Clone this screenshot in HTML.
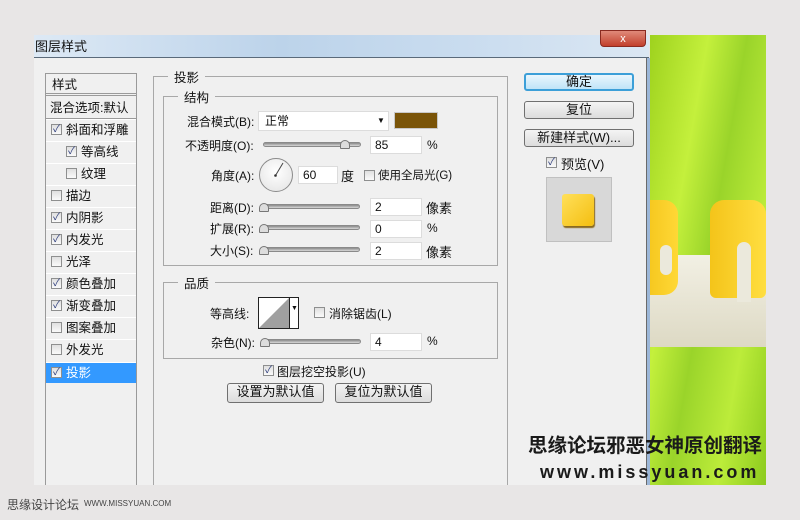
<!DOCTYPE html>
<html><head><meta charset="utf-8"><style>
*{margin:0;padding:0;box-sizing:border-box}
body{width:800px;height:520px;background:#e8e6e6;position:relative;overflow:hidden;font-family:"Liberation Sans","Noto Sans CJK SC",sans-serif;font-size:12px;color:#111}
.a{position:absolute;white-space:nowrap}
.cb{position:absolute;width:11px;height:11px;border:1px solid #8e8f8f;background:linear-gradient(#e0e0e0,#fafafa);font-size:10px;line-height:9px;text-align:center;color:#2a3a7a}
.inp{position:absolute;height:18px;background:#fff;border:1px solid #dcdcdc;padding-left:4px;line-height:16px}
.sl{position:absolute;height:5px;border-radius:3px;background:linear-gradient(#8a8a8a,#d8d8d8);border:1px solid #8a8a8a}
.btn{position:absolute;height:18px;border:1px solid #707070;border-radius:3px;background:linear-gradient(#f4f4f4,#dcdcdc);text-align:center;line-height:16px;font-size:13px}
.grp{position:absolute;border:1px solid #a8a8a8}
.gl{position:absolute;background:#f0f0f0;padding:0 6px;font-size:12.5px}
.row{position:absolute;left:46px;width:90px;height:21px;border-top:1px solid #fff;line-height:20px;font-size:12.5px}
.row .cb{top:4px}
</style></head><body>
<div class="a" style="left:34px;top:35px;width:615px;height:23px;background:linear-gradient(90deg,#dde9f5,#bcd3ea 40%,#c9dcef 70%,#dbe7f3);border-bottom:1px solid #5a6a7a"></div>
<div class="a" style="left:35px;top:36px;font-size:13px">图层样式</div>
<div class="a" style="left:600px;top:30px;width:46px;height:17px;background:linear-gradient(#e08a7a,#c2402c);border:1px solid #8a2a20;border-radius:0 0 4px 4px;color:#fff;text-align:center;font-size:11px;line-height:16px">x</div>
<div class="a" style="left:34px;top:58px;width:613px;height:427px;background:#f0f0f0;border-right:1px solid #6a6a6a"></div>
<div class="a" style="left:647px;top:58px;width:3px;height:427px;background:#9cb7d8"></div>
<div class="a" style="left:45px;top:73px;width:92px;height:412px;border:1px solid #9a9a9a;border-bottom:none;background:#f0f0f0"></div>
<div class="a" style="left:46px;top:93px;width:90px;height:3px;border-top:1px solid #9a9a9a;border-bottom:1px solid #9a9a9a"></div>
<div class="a" style="left:46px;top:118px;width:90px;border-top:1px solid #9a9a9a"></div>
<div class="a" style="left:52px;top:74px;font-size:12.5px">样式</div>
<div class="a" style="left:50px;top:97px;font-size:12.5px">混合选项:默认</div>
<div class="row" style="top:119px"><div class="cb" style="left:5px">✓</div><span class="a" style="left:20px">斜面和浮雕</span></div>
<div class="row" style="top:141px"><div class="cb" style="left:20px">✓</div><span class="a" style="left:35px">等高线</span></div>
<div class="row" style="top:163px"><div class="cb" style="left:20px"></div><span class="a" style="left:35px">纹理</span></div>
<div class="row" style="top:185px"><div class="cb" style="left:5px"></div><span class="a" style="left:20px">描边</span></div>
<div class="row" style="top:207px"><div class="cb" style="left:5px">✓</div><span class="a" style="left:20px">内阴影</span></div>
<div class="row" style="top:229px"><div class="cb" style="left:5px">✓</div><span class="a" style="left:20px">内发光</span></div>
<div class="row" style="top:251px"><div class="cb" style="left:5px"></div><span class="a" style="left:20px">光泽</span></div>
<div class="row" style="top:273px"><div class="cb" style="left:5px">✓</div><span class="a" style="left:20px">颜色叠加</span></div>
<div class="row" style="top:295px"><div class="cb" style="left:5px">✓</div><span class="a" style="left:20px">渐变叠加</span></div>
<div class="row" style="top:317px"><div class="cb" style="left:5px"></div><span class="a" style="left:20px">图案叠加</span></div>
<div class="row" style="top:339px"><div class="cb" style="left:5px"></div><span class="a" style="left:20px">外发光</span></div>
<div class="row" style="top:362px;background:#3399ff;color:#fff"><div class="cb" style="left:5px">✓</div><span class="a" style="left:20px">投影</span></div>
<div class="grp" style="left:153px;top:76px;width:355px;height:409px;border-bottom:none"></div>
<div class="gl" style="left:168px;top:67px">投影</div>
<div class="grp" style="left:163px;top:96px;width:335px;height:170px"></div>
<div class="gl" style="left:178px;top:87px">结构</div>
<div class="grp" style="left:163px;top:282px;width:335px;height:77px"></div>
<div class="gl" style="left:178px;top:273px">品质</div>
<div class="a" style="left:187px;top:113px">混合模式(B):</div>
<div class="inp" style="left:258px;top:111px;width:131px;height:20px;line-height:18px;padding-left:6px">正常<span class="a" style="left:118px;top:0;font-size:8px">▼</span></div>
<div class="a" style="left:394px;top:112px;width:44px;height:17px;background:#7a5408;border:1px solid #c8c8c8"></div>
<div class="a" style="left:185px;top:137px">不透明度(O):</div>
<div class="sl" style="left:263px;top:142px;width:98px"></div>
<div class="a" style="left:340px;top:140px;width:10px;height:9px;border:1px solid #777;border-radius:5px 5px 1px 1px;background:#ddd"></div>
<div class="inp" style="left:370px;top:136px;width:52px">85</div>
<div class="a" style="left:427px;top:138px">%</div>
<div class="a" style="left:211px;top:167px">角度(A):</div>
<div class="a" style="left:259px;top:158px;width:34px;height:34px;border:1px solid #8a8a8a;border-radius:50%;background:radial-gradient(circle at 50% 40%,#fff,#e2e2e2)"></div>
<svg class="a" style="left:259px;top:158px" width="34" height="34"><line x1="16.5" y1="17.5" x2="24" y2="5" stroke="#444" stroke-width="1"/><circle cx="16.5" cy="17.5" r="1.3" fill="#333"/></svg>
<div class="inp" style="left:298px;top:166px;width:40px">60</div>
<div class="a" style="left:341px;top:166px;font-size:13px">度</div>
<div class="cb" style="left:364px;top:170px"></div>
<div class="a" style="left:378px;top:167px;font-size:11.5px">使用全局光(G)</div>
<div class="a" style="left:210px;top:199px">距离(D):</div>
<div class="sl" style="left:262px;top:204px;width:98px"></div>
<div class="a" style="left:259px;top:203px;width:10px;height:9px;border:1px solid #777;border-radius:5px 5px 1px 1px;background:#ddd"></div>
<div class="inp" style="left:370px;top:198px;width:52px">2</div>
<div class="a" style="left:426px;top:198px;font-size:13px">像素</div>
<div class="a" style="left:210px;top:220px">扩展(R):</div>
<div class="sl" style="left:262px;top:225px;width:98px"></div>
<div class="a" style="left:259px;top:224px;width:10px;height:9px;border:1px solid #777;border-radius:5px 5px 1px 1px;background:#ddd"></div>
<div class="inp" style="left:370px;top:220px;width:52px">0</div>
<div class="a" style="left:427px;top:221px">%</div>
<div class="a" style="left:210px;top:242px">大小(S):</div>
<div class="sl" style="left:262px;top:247px;width:98px"></div>
<div class="a" style="left:259px;top:246px;width:10px;height:9px;border:1px solid #777;border-radius:5px 5px 1px 1px;background:#ddd"></div>
<div class="inp" style="left:370px;top:242px;width:52px">2</div>
<div class="a" style="left:426px;top:242px;font-size:13px">像素</div>
<div class="a" style="left:210px;top:305px">等高线:</div>
<div class="a" style="left:258px;top:297px;width:41px;height:32px;border:1px solid #222;background:#fff"></div>
<svg class="a" style="left:259px;top:298px" width="30" height="30"><polygon points="0,30 30,0 30,30" fill="#a0a0a0"/></svg>
<div class="a" style="left:289px;top:298px;width:1px;height:30px;background:#222"></div>
<div class="a" style="left:291px;top:305px;font-size:7px">▼</div>
<div class="cb" style="left:314px;top:307px"></div>
<div class="a" style="left:329px;top:305px">消除锯齿(L)</div>
<div class="a" style="left:211px;top:334px">杂色(N):</div>
<div class="sl" style="left:263px;top:339px;width:98px"></div>
<div class="a" style="left:260px;top:338px;width:10px;height:9px;border:1px solid #777;border-radius:5px 5px 1px 1px;background:#ddd"></div>
<div class="inp" style="left:370px;top:333px;width:52px">4</div>
<div class="a" style="left:427px;top:334px">%</div>
<div class="cb" style="left:263px;top:365px">✓</div>
<div class="a" style="left:277px;top:363px">图层挖空投影(U)</div>
<div class="btn" style="left:227px;top:383px;width:97px;height:20px">设置为默认值</div>
<div class="btn" style="left:335px;top:383px;width:97px;height:20px">复位为默认值</div>
<div class="btn" style="left:524px;top:73px;width:110px;border:2px solid #3c9fd8;background:linear-gradient(#eaf6fd,#bfe4f8);line-height:14px">确定</div>
<div class="btn" style="left:524px;top:101px;width:110px">复位</div>
<div class="btn" style="left:524px;top:129px;width:110px">新建样式(W)...</div>
<div class="cb" style="left:546px;top:157px">✓</div>
<div class="a" style="left:561px;top:154px;font-size:13px">预览(V)</div>
<div class="a" style="left:546px;top:177px;width:66px;height:65px;background:#d8d8d8;border:1px solid #c0c0c0"></div>
<div class="a" style="left:562px;top:194px;width:32px;height:32px;background:linear-gradient(135deg,#ffe05a,#f4be10);border-radius:3px;box-shadow:1px 2px 1px #8a6a20"></div>
<div class="a" style="left:650px;top:35px;width:116px;height:450px;background:linear-gradient(100deg,#9ed21e,#c4f03c 30%,#9ad42a 50%,#bcec3a 75%,#8ccb1e)"></div>
<div class="a" style="left:650px;top:255px;width:116px;height:92px;background:linear-gradient(#f2f0e4,#ddd9c4)"></div>
<div class="a" style="left:650px;top:200px;width:28px;height:95px;background:linear-gradient(90deg,#f6c820,#ffd836);border-radius:0 14px 14px 0"></div>
<div class="a" style="left:660px;top:245px;width:12px;height:30px;background:#ebe9dc;border-radius:6px"></div>
<div class="a" style="left:710px;top:200px;width:56px;height:98px;background:linear-gradient(90deg,#f4c41a,#ffde40);border-radius:14px 14px 6px 6px"></div>
<div class="a" style="left:737px;top:242px;width:14px;height:60px;background:#ebe9dc;border-radius:7px 7px 0 0"></div>
<div class="a" style="left:528px;top:429px;font-size:19.5px;font-weight:bold;color:#1a1a1a">思缘论坛邪恶女神原创翻译</div>
<div class="a" style="left:540px;top:462px;font-size:18px;font-weight:bold;color:#1a1a1a;letter-spacing:3px">www.missyuan.com</div>
<div class="a" style="left:7px;top:496px;font-size:12px;color:#444">思缘设计论坛</div>
<div class="a" style="left:84px;top:499px;font-size:8px;color:#444">WWW.MISSYUAN.COM</div>
</body></html>
